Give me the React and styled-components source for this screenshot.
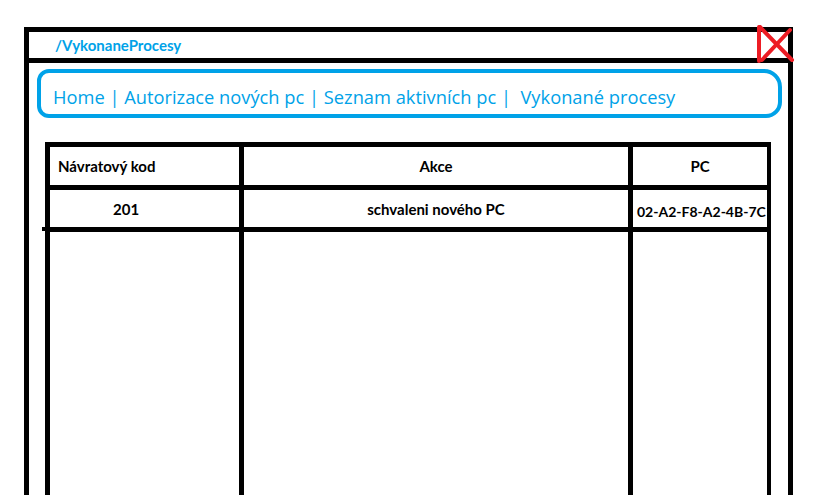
import styled, {createGlobalStyle} from "styled-components";

const GlobalStyle = createGlobalStyle`
  html, body {
    margin: 0;
    padding: 0;
    background: #fff;
    overflow: hidden;
  }
`

const Page = styled.div`
  padding: 27px 0 0 24px;
  height: 468px;
  overflow: hidden;
`

const Frame = styled.div`
  position: relative;
  width: 759px;
  height: 500px;
  border: 5px solid #000;
  border-bottom: none;
`

const TitleBar = styled.div`
  height: 26px;
  border-bottom: 5px solid #000;
  display: flex;
  align-items: center;
  padding-left: 26px;
  font-family: "Lato", "Open Sans", sans-serif;
  font-weight: 700;
  font-size: 15px;
  color: #00a2e8;
`

const CloseMark = styled.svg`
  position: absolute;
  top: -7px;
  right: -8px;
`

const Nav = styled.nav`
  box-sizing: border-box;
  margin: 6px 6px 0 8px;
  height: 49px;
  border: 4px solid #00a2e8;
  border-radius: 12px 18px 16px 12px;
  display: flex;
  align-items: center;
  padding: 6px 0 0 12px;
  font-family: "Open Sans", "Noto Sans", sans-serif;
  font-size: 18.3px;
  color: #00a2e8;
  white-space: pre;
`

const Table = styled.div`
  position: relative;
  margin: 24px 17px 0 16px;
  background: #000;
  padding: 5px 5px 0 5px;
  display: grid;
  grid-template-columns: 189px 384px 134px;
  grid-template-rows: 38px 37px 300px;
  column-gap: 5px;
  row-gap: 5px;
  font-family: "Lato", "Open Sans", sans-serif;
  font-weight: 700;
  color: #000;

  &::before {
    content: "";
    position: absolute;
    left: -3px;
    top: 85px;
    width: 4px;
    height: 4px;
    background: #000;
  }
`

const Cell = styled.div`
  background: #fff;
  display: flex;
  align-items: center;
  justify-content: ${p => p.$align === "left" ? "flex-start" : "center"};
  padding-left: ${p => p.$pad || 0}px;
  padding-top: ${p => p.$top || 0}px;
  font-size: ${p => p.$size || 15}px;
  white-space: nowrap;
`

const App = () => {
    return (
        <>
            <GlobalStyle/>
            <Page>
                <Frame>
                    <TitleBar>/VykonaneProcesy</TitleBar>
                    <CloseMark width="40" height="40" viewBox="0 0 40 40">
                        <g stroke="#ed1c24" strokeWidth="4" strokeLinecap="round" fill="none">
                            <line x1="3" y1="2" x2="3" y2="36"/>
                            <line x1="4" y1="2" x2="36" y2="35"/>
                            <line x1="34" y1="5" x2="6" y2="35"/>
                        </g>
                    </CloseMark>
                    <Nav>Home | Autorizace nových pc | Seznam aktivních pc |  Vykonané procesy</Nav>
                    <Table>
                        <Cell $align="left" $pad={8}>Návratový kod</Cell>
                        <Cell $top={-6}>Akce</Cell>
                        <Cell>PC</Cell>
                        <Cell $align="left" $pad={63}>201</Cell>
                        <Cell $top={-6}>schvaleni nového PC</Cell>
                        <Cell $align="left" $pad={4} $top={6} $size={14}>02-A2-F8-A2-4B-7C</Cell>
                        <Cell/>
                        <Cell/>
                        <Cell/>
                    </Table>
                </Frame>
            </Page>
        </>
    )
}

export default App
